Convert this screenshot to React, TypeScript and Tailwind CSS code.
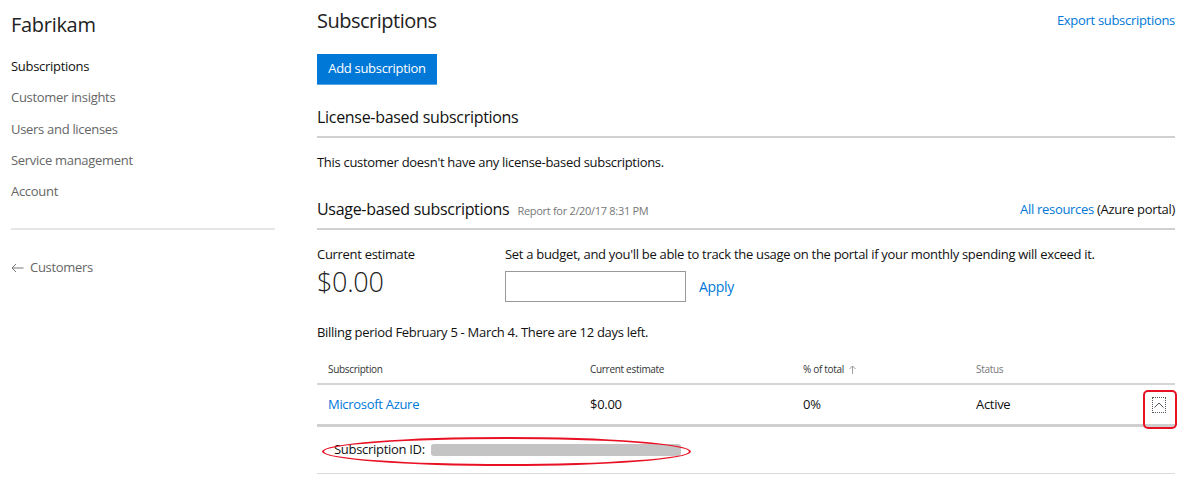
import React from "react";

const font = { fontFamily: '"Segoe UI", "Open Sans", "Noto Sans", sans-serif' };

export default function App() {
  return (
    <div className="w-[1203px] h-[477px] bg-white text-black overflow-hidden flex tracking-[-0.3px]" style={font}>
      {/* Sidebar */}
      <aside className="w-[275px] shrink-0 pl-[11px] pt-[11px]">
        <div className="text-[20px] leading-[28px] text-[#222]">Fabrikam</div>
        <nav className="mt-[17px] flex flex-col gap-[10px] text-[13px] leading-[21.3px] text-[#666]">
          <div className="text-[#111]">Subscriptions</div>
          <div>Customer insights</div>
          <div>Users and licenses</div>
          <div>Service management</div>
          <div>Account</div>
        </nav>
        <div className="mt-[26px] h-[2px] bg-[#e6e6e6]" />
        <div className="mt-[28px] flex items-center gap-[6px] text-[13px] text-[#666]">
          <svg width="13" height="10" viewBox="0 0 13 10" fill="none" stroke="#777" strokeWidth="1">
            <path d="M12.5 5H1M5 1L1 5l4 4" />
          </svg>
          <span>Customers</span>
        </div>
      </aside>

      {/* Main */}
      <main className="ml-[42px] w-[858px] shrink-0 pt-[7px]">
        <div className="flex items-start justify-between">
          <h1 className="text-[20px] leading-[28px] text-[#222] font-normal tracking-[-0.5px]">Subscriptions</h1>
          <a className="text-[13px] leading-[26px] text-[#0078d7]">Export subscriptions</a>
        </div>
        <button className="mt-[19px] h-[31px] w-[120px] bg-[#0078d7] text-white text-[13px] border-b border-[#5aa6e6] tracking-[-0.3px]">
          Add subscription
        </button>

        <div className="mt-[21px] text-[16px] leading-[22px] text-[#111]">License-based subscriptions</div>
        <div className="mt-[8px] h-[2px] bg-[#d0d0d0]" />
        <div className="mt-[15px] text-[13px] leading-[19px] text-[#111]">
          This customer doesn't have any license-based subscriptions.
        </div>

        <div className="mt-[26px] flex items-end justify-between">
          <div className="flex items-baseline gap-[8px]">
            <span className="text-[16px] leading-[22px] text-[#111]">Usage-based subscriptions</span>
            <span className="text-[11px] text-[#777]">Report for 2/20/17 8:31 PM</span>
          </div>
          <div className="text-[13px] leading-[22px] text-[#111]">
            <span className="text-[#0078d7]">All resources</span> (Azure portal)
          </div>
        </div>
        <div className="mt-[8px] h-[2px] bg-[#d0d0d0]" />

        <div className="mt-[15px] flex">
          <div className="w-[188px]">
            <div className="text-[13px] leading-[19px] text-[#111]">Current estimate</div>
            <div className="text-[27px] leading-[36px] text-[#222] font-light">$0.00</div>
          </div>
          <div>
            <div className="text-[13px] leading-[19px] text-[#111]">
              Set a budget, and you'll be able to track the usage on the portal if your monthly spending will exceed it.
            </div>
            <div className="mt-[7px] flex items-center">
              <input className="w-[181px] h-[31px] border border-[#999] outline-none" />
              <span className="ml-[13px] text-[14px] text-[#0078d7]">Apply</span>
            </div>
          </div>
        </div>

        <div className="mt-[21px] text-[13px] leading-[19px] text-[#111]">
          Billing period February 5 - March 4. There are 12 days left.
        </div>

        {/* Table */}
        <div className="mt-[13px] flex items-center h-[30px] text-[10px] text-[#333] pl-[11px] border-b-2 border-[#d5d5d5]">
          <div className="w-[262px]">Subscription</div>
          <div className="w-[213px]">Current estimate</div>
          <div className="w-[173px] flex items-center gap-[5px]">
            % of total
            <svg width="7" height="9" viewBox="0 0 7 9" fill="none" stroke="#888" strokeWidth="0.8">
              <path d="M3.5 9V1M0.5 4L3.5 1l3 3" />
            </svg>
          </div>
          <div className="text-[#777]">Status</div>
        </div>
        <div className="relative flex items-center h-[42px] text-[13px] text-[#111] pl-[11px] border-b-[3px] border-[#cfcfcf]">
          <div className="w-[262px] text-[#0078d7]">Microsoft Azure</div>
          <div className="w-[213px]">$0.00</div>
          <div className="w-[173px]">0%</div>
          <div className="flex-1">Active</div>
          <div className="mr-[9px] w-[14px] h-[16px] border border-dotted border-[#555] flex items-center justify-center">
            <svg width="10" height="6" viewBox="0 0 10 6" fill="none" stroke="#555" strokeWidth="1">
              <path d="M0.5 5.5L5 1l4.5 4.5" />
            </svg>
          </div>
          <div className="absolute right-[-2px] top-[5px] w-[34px] h-[39px] border-2 border-[#e81123] rounded-[5px]" />
        </div>
        <div className="relative h-[47px] flex items-center border-b border-[#dadada]">
          <div className="ml-[17px] text-[13px] text-[#111] flex items-center">
            Subscription ID:
            <span className="ml-[6px] inline-block w-[250px] h-[12px] bg-[#c4c4c4] rounded-[3px]" />
          </div>
          <div className="absolute left-[5px] top-[10px] w-[369px] h-[29px] border-2 border-[#e81123] rounded-[50%/50%]" />
        </div>
      </main>
    </div>
  );
}
